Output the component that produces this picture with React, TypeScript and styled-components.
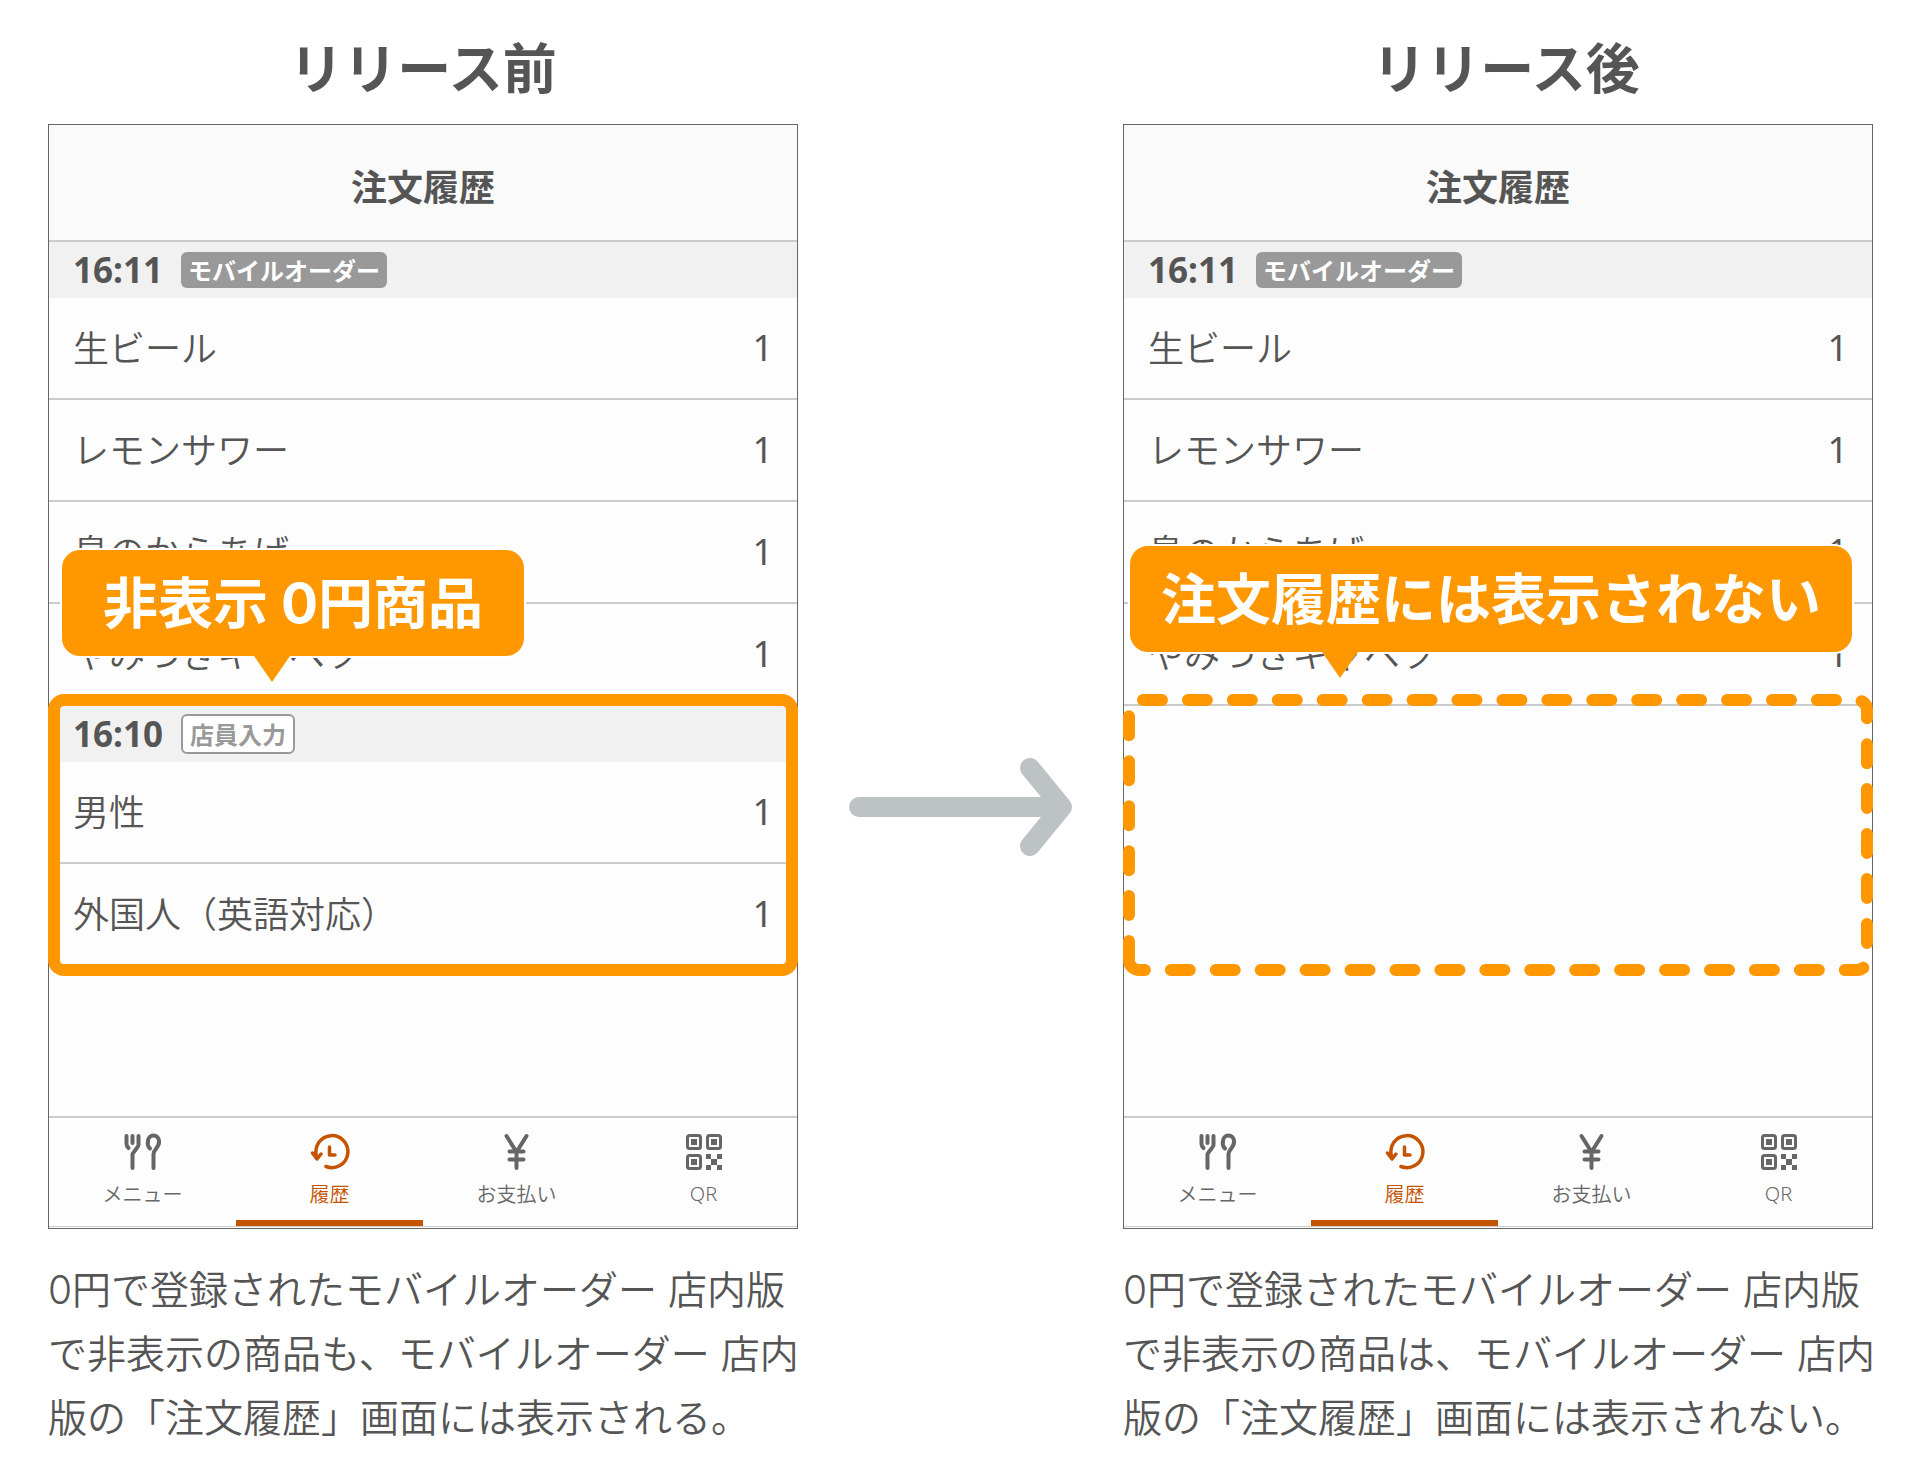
import React from 'react';
import styled, { createGlobalStyle, css } from 'styled-components';

const ink = '#555';
const orange = '#ff9800';
const rust = '#c45400';
const line = '#ccc';
const jp = `"Noto Sans CJK JP", sans-serif`;

const GlobalStyle = createGlobalStyle`
  * { box-sizing: border-box; }
  body { margin: 0; background: #fff; color: ${ink}; font-family: "Noto Sans", ${jp}; }
  h1, h2, p, ul { margin: 0; padding: 0; }
`;

const Page = styled.main`
  display: grid;
  grid-template-columns: 30fr 13fr 30fr;
  padding: 26px 47px 16px 48px;
`;

const Panel = styled.section`
  min-width: 0;
`;

const Title = styled.h1<{ $indent?: boolean }>`
  font: 700 54px/80px ${jp};
  text-align: center;
  padding: 0 0 18px ${p => (p.$indent ? 16 : 0)}px;
`;

const Phone = styled.div`
  position: relative;
  display: flex;
  flex-direction: column;
  min-height: 1105px;
  border: 1px solid #666;
  background: #fdfdfd;
`;

const ScreenHead = styled.header`
  display: flex;
  align-items: center;
  justify-content: center;
  height: 117px;
  padding-top: 4px;
  background: #fafafa;
  border-bottom: 2px solid ${line};
`;

const ScreenTitle = styled.h2`
  font: 700 36px/48px ${jp};
`;

const GroupHead = styled.div`
  display: flex;
  align-items: center;
  gap: 16px;
  height: 56px;
  padding: 0 24px;
  background: #f1f1f1;
`;

const Time = styled.time`
  min-width: 92px;
  font: 700 35px/48px "Noto Sans", ${jp};
`;

const Badge = styled.span<{ $outlined?: boolean }>`
  font: 700 24px/36px ${jp};
  padding: 0 7px;
  border-radius: 6px;
  color: #fff;
  background: #999;
  ${p => p.$outlined && css`
    border: 2px solid #999;
    color: #999;
    background: #fff;
  `}
`;

const Items = styled.ul`
  list-style: none;
`;

const Item = styled.li<{ $last?: boolean }>`
  display: flex;
  align-items: center;
  justify-content: space-between;
  height: 102px;
  padding: 0 24px;
  font: 400 36px/48px "Noto Sans", ${jp};
  border-bottom: 2px solid ${p => (p.$last ? 'transparent' : line)};
`;

const Name = styled.span`
  padding-bottom: 4px;
  font-family: ${jp};
  font-weight: 350;
`;

const Count = styled.span`
  font-weight: 400;
`;

const HighlightArea = styled.div`
  position: relative;
`;

const Frame = styled.div`
  position: absolute;
  inset: -12px -1px -10px;
  border: 12px solid ${orange};
  border-radius: 16px;
`;

const DashedFrame = styled.svg`
  position: absolute;
  left: -1px;
  top: 569px;
  width: calc(100% + 2px);
  height: 282px;
`;

const Callout = styled.div<{ $left: number; $top: number; $pad: number; $tail: number }>`
  position: absolute;
  z-index: 1;
  left: ${p => p.$left}px;
  top: ${p => p.$top}px;
  padding: 13px ${p => p.$pad}px;
  border-radius: 18px;
  background: ${orange};
  box-shadow: 0 0 0 2px #fff;
  color: #fff;
  font: 700 55px/80px Inter, ${jp};
  white-space: nowrap;
  &::after {
    content: '';
    position: absolute;
    top: 100%;
    left: ${p => p.$tail}px;
    border: 18px solid transparent;
    border-top: 26px solid ${orange};
    border-bottom: 0;
  }
`;

const Tabs = styled.nav`
  display: grid;
  grid-template-columns: repeat(4, 1fr);
  margin-top: auto;
  margin-bottom: 1px;
  height: 111px;
  border-top: 2px solid ${line};
  border-bottom: 1px solid ${line};
`;

const Tab = styled.button<{ $active?: boolean }>`
  display: flex;
  flex-direction: column;
  align-items: center;
  gap: 8px;
  padding: 14px 0 0;
  border: 0;
  border-bottom: 6px solid ${p => (p.$active ? rust : 'transparent')};
  background: none;
  color: ${p => (p.$active ? rust : '#666')};
  font: 350 20px/28px ${jp};
  svg { width: 40px; height: 40px; }
`;

const Latin = styled.span`
  font-family: "Noto Sans", ${jp};
`;

const Arrow = styled.svg`
  justify-self: center;
  align-self: start;
  margin-top: 730px;
  width: 224px;
  height: 100px;
`;

const Caption = styled.p`
  margin-top: 29px;
  font: 350 39px/64px Inter, ${jp};
  white-space: nowrap;
`;

const MenuIcon = () => (
  <svg viewBox="0 0 40 40" fill="none" stroke="currentColor" strokeWidth="4" strokeLinecap="round" strokeLinejoin="round">
    <path d="M3.500 4v8q0 2 2 4M9.500 4v7M15.500 4v9q0 1-2 3.500T9.500 22v14" />
    <path d="M27 16.500C24.500 14 24.500 11 25 9a5.500 5.500 0 0 1 11 0c1 6-5.500 8-5.500 13v14" />
  </svg>
);

const HistoryIcon = () => (
  <svg viewBox="0 0 40 40" fill="none" stroke="currentColor" strokeWidth="3.500" strokeLinecap="round" strokeLinejoin="round">
    <path d="M6.500 24A16 16 0 1 1 16 34.500M2.500 21l4.500 6 4-5" />
    <path d="M19.500 15v8h5.500" />
  </svg>
);

const YenIcon = () => (
  <svg viewBox="0 0 40 40" fill="none" stroke="currentColor" strokeWidth="4" strokeLinecap="round" strokeLinejoin="round">
    <path d="M9.500 4l10 16 10-16M19.500 20v16M12.500 19.500h14M12.500 27.500h14" />
  </svg>
);

const QrIcon = () => (
  <svg viewBox="0 0 40 40" fill="none" stroke="currentColor" strokeWidth="3">
    <rect x="3.500" y="3.500" width="13" height="13" rx="2" />
    <rect x="23.500" y="3.500" width="13" height="13" rx="2" />
    <rect x="3.500" y="23.500" width="13" height="13" rx="2" />
    <path fill="currentColor" stroke="none" d="M7 7h6v6H7zM27 7h6v6h-6zM7 27h6v6H7zM22 22h5v5h-5zM33 22h5v5h-5zM27 27h6v6h-6zM22 33h5v5h-5zM33 33h5v5h-5z" />
  </svg>
);

const tabs = [
  { label: 'メニュー', Icon: MenuIcon },
  { label: '履歴', Icon: HistoryIcon, active: true },
  { label: 'お支払い', Icon: YenIcon },
  { label: <Latin>QR</Latin>, Icon: QrIcon },
];

const orders = ['生ビール', 'レモンサワー', '鳥のからあげ', 'やみつきキャベツ'];
const staffEntries = ['男性', '外国人（英語対応）'];

const ItemList = ({ names, closed }: { names: string[]; closed?: boolean }) => (
  <Items>
    {names.map((name, i) => (
      <Item key={name} $last={closed && i === names.length - 1}>
        <Name>{name}</Name>
        <Count>1</Count>
      </Item>
    ))}
  </Items>
);

const Screen = ({ children }: { children: React.ReactNode }) => (
  <Phone>
    <ScreenHead><ScreenTitle>注文履歴</ScreenTitle></ScreenHead>
    <GroupHead><Time>16:11</Time><Badge>モバイルオーダー</Badge></GroupHead>
    <ItemList names={orders} />
    {children}
    <Tabs>
      {tabs.map(({ label, Icon, active }, i) => (
        <Tab key={i} type="button" $active={active}><Icon />{label}</Tab>
      ))}
    </Tabs>
  </Phone>
);

export default function App() {
  return (
    <>
      <GlobalStyle />
      <Page>
        <Panel>
          <Title>リリース前</Title>
          <Screen>
            <HighlightArea>
              <GroupHead><Time>16:10</Time><Badge $outlined>店員入力</Badge></GroupHead>
              <ItemList names={staffEntries} closed />
              <Frame />
            </HighlightArea>
            <Callout $left={13} $top={425} $pad={41} $tail={192}>非表示 0円商品</Callout>
          </Screen>
          <Caption>
            0円で登録されたモバイルオーダー 店内版<br />
            で非表示の商品も、モバイルオーダー 店内<br />
            版の「注文履歴」画面には表示される。
          </Caption>
        </Panel>
        <Arrow viewBox="0 0 224 100" fill="none" stroke="#bdc3c4" strokeWidth="20" strokeLinecap="round" strokeLinejoin="round">
          <path d="M10 51h203M181 12l32 39-32 39" />
        </Arrow>
        <Panel>
          <Title $indent>リリース後</Title>
          <Screen>
            <DashedFrame viewBox="0 0 750 282" preserveAspectRatio="none" fill="none" stroke={orange} strokeWidth="12" strokeLinecap="round" strokeDasharray="19 25.930">
              <path d="M6 266V16A10 10 0 0 1 16 6H734A10 10 0 0 1 744 16V266A10 10 0 0 1 734 276H16A10 10 0 0 1 6 266" />
            </DashedFrame>
            <Callout $left={6} $top={421} $pad={31} $tail={192}>注文履歴には表示されない</Callout>
          </Screen>
          <Caption>
            0円で登録されたモバイルオーダー 店内版<br />
            で非表示の商品は、モバイルオーダー 店内<br />
            版の「注文履歴」画面には表示されない。
          </Caption>
        </Panel>
      </Page>
    </>
  );
}
